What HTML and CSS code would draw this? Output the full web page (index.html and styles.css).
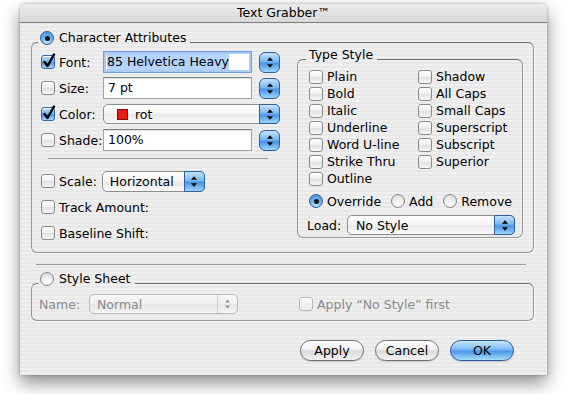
FILE: index.html
```html
<!DOCTYPE html>
<html>
<head>
<meta charset="utf-8">
<link rel="stylesheet" href="styles.css">
</head>
<body>
<div class="window">
  <div class="titlebar">Text Grabber™</div>
  <div class="content">
    <div class="group ca">
      <div class="group-title"><span class="radio on"></span><span>Character Attributes</span></div>
      <div class="ca-body">
        <div class="left">
          <div class="row">
            <span class="cb on"><svg class="check" viewBox="0 0 14 14"><path d="M3.5 7 L6.5 11 L13 -0.5"/></svg></span>
            <span class="lbl">Font:</span>
            <div class="field focus"><span class="sel">85 Helvetica Heavy</span></div>
            <span class="stepper"><svg class="arr" viewBox="0 0 7 12"><path d="M3.5 0 L7 4 L0 4 Z M3.5 12 L7 8 L0 8 Z"/></svg></span>
          </div>
          <div class="row">
            <span class="cb"></span>
            <span class="lbl">Size:</span>
            <div class="field">7 pt</div>
            <span class="stepper"><svg class="arr" viewBox="0 0 7 12"><path d="M3.5 0 L7 4 L0 4 Z M3.5 12 L7 8 L0 8 Z"/></svg></span>
          </div>
          <div class="row">
            <span class="cb on"><svg class="check" viewBox="0 0 14 14"><path d="M3.5 7 L6.5 11 L13 -0.5"/></svg></span>
            <span class="lbl">Color:</span>
            <div class="popup color"><span class="swatch"></span><span class="ptext">rot</span><span class="parr"><svg class="arr" viewBox="0 0 7 12"><path d="M3.5 0 L7 4 L0 4 Z M3.5 12 L7 8 L0 8 Z"/></svg></span></div>
          </div>
          <div class="row">
            <span class="cb"></span>
            <span class="lbl">Shade:</span>
            <div class="field">100%</div>
            <span class="stepper"><svg class="arr" viewBox="0 0 7 12"><path d="M3.5 0 L7 4 L0 4 Z M3.5 12 L7 8 L0 8 Z"/></svg></span>
          </div>
          <div class="sep"></div>
          <div class="row scale">
            <span class="cb"></span>
            <span class="lbl-auto">Scale:</span>
            <div class="popup hpop"><span class="ptext">Horizontal</span><span class="parr"><svg class="arr" viewBox="0 0 7 12"><path d="M3.5 0 L7 4 L0 4 Z M3.5 12 L7 8 L0 8 Z"/></svg></span></div>
          </div>
          <div class="row">
            <span class="cb"></span>
            <span class="lbl-auto">Track Amount:</span>
          </div>
          <div class="row">
            <span class="cb"></span>
            <span class="lbl-auto">Baseline Shift:</span>
          </div>
        </div>
        <div class="group ts">
          <div class="group-title small"><span>Type Style</span></div>
          <div class="styles">
            <div class="opt"><span class="cb"></span>Plain</div>
            <div class="opt"><span class="cb"></span>Shadow</div>
            <div class="opt"><span class="cb"></span>Bold</div>
            <div class="opt"><span class="cb"></span>All Caps</div>
            <div class="opt"><span class="cb"></span>Italic</div>
            <div class="opt"><span class="cb"></span>Small Caps</div>
            <div class="opt"><span class="cb"></span>Underline</div>
            <div class="opt"><span class="cb"></span>Superscript</div>
            <div class="opt"><span class="cb"></span>Word U-line</div>
            <div class="opt"><span class="cb"></span>Subscript</div>
            <div class="opt"><span class="cb"></span>Strike Thru</div>
            <div class="opt"><span class="cb"></span>Superior</div>
            <div class="opt"><span class="cb"></span>Outline</div>
          </div>
          <div class="radios">
            <div class="ropt"><span class="radio on"></span>Override</div>
            <div class="ropt"><span class="radio"></span>Add</div>
            <div class="ropt"><span class="radio"></span>Remove</div>
          </div>
          <div class="load">
            <span class="load-lbl">Load:</span>
            <div class="popup lpop"><span class="ptext">No Style</span><span class="parr"><svg class="arr" viewBox="0 0 7 12"><path d="M3.5 0 L7 4 L0 4 Z M3.5 12 L7 8 L0 8 Z"/></svg></span></div>
          </div>
        </div>
      </div>
    </div>
    <div class="hsep"></div>
    <div class="group ss">
      <div class="group-title"><span class="radio"></span><span>Style Sheet</span></div>
      <div class="ss-body">
        <span class="name-lbl">Name:</span>
        <div class="popup npop disabled"><span class="ptext">Normal</span><span class="parr"><svg class="arr" viewBox="0 0 7 12"><path d="M3.5 0 L7 4 L0 4 Z M3.5 12 L7 8 L0 8 Z"/></svg></span></div>
        <div class="opt dis"><span class="cb dis"></span>Apply “No Style” first</div>
      </div>
    </div>
    <div class="buttons">
      <span class="btn">Apply</span>
      <span class="btn">Cancel</span>
      <span class="btn default">OK</span>
    </div>
  </div>
</div>
</body>
</html>
```
FILE: styles.css
```css
html, body {
  margin: 0;
  padding: 0;
  background: #ffffff;
}
body {
  font-family: "DejaVu Sans", "Liberation Sans", sans-serif;
  font-size: 12.5px;
  color: #000;
  min-height: 394px;
}
.window {
  width: 527px;
  margin: 4px 0 0 20px;
  background: repeating-linear-gradient(to bottom, #efefef 0px, #efefef 2px, #e8e8e8 2px, #e8e8e8 4px) fixed;
  box-shadow: 0 8px 18px rgba(0,0,0,0.45), 0 0 3px rgba(0,0,0,0.30);
  border-radius: 5px 5px 0 0;
}
.titlebar {
  height: 18px;
  line-height: 18px;
  text-align: center;
  border-bottom: 1px solid #7e7e7e;
  border-radius: 5px 5px 0 0;
  background: linear-gradient(to bottom, #ebebeb, #d9d9d9);
}
.content {
  padding: 19px 13px 14px 11px;
}
.group {
  border: 1px solid #969696;
  border-top-color: #6c6c6c;
  border-radius: 6px;
  box-shadow: 1px 1px 0 rgba(255,255,255,0.7);
}
.group-title {
  display: flex;
  align-items: center;
  gap: 5px;
  height: 16px;
  line-height: 16px;
  width: max-content;
  margin: -13px 0 0 -3px;
  padding: 0 4px 0 2px;
  background: repeating-linear-gradient(to bottom, #efefef 0px, #efefef 2px, #e8e8e8 2px, #e8e8e8 4px) fixed;
}
.group-title.small {
  margin-left: -3px;
  padding: 0 4px 0 3px;
}
.ss .group-title {
  margin-left: -1px;
}
/* Character attributes */
.ca {
  padding: 0 10px 8px 9px;
}
.ca-body {
  display: flex;
  margin-top: 5px;
}
.left {
  width: 239px;
  flex: none;
  display: flex;
  flex-direction: column;
}
.row {
  display: flex;
  align-items: center;
  height: 22px;
}
.row + .row { margin-top: 4px; }
.sep {
  height: 0;
  border-top: 1px solid #9a9a9a;
  margin: 7px 12px 0 7px;
}
.row.scale { margin-top: 11px; }
.lbl { width: 44px; flex: none; }
.lbl-auto { margin-right: 5px; }

/* checkbox */
.cb {
  position: relative;
  flex: none;
  box-sizing: border-box;
  width: 14px;
  height: 14px;
  margin-right: 4px;
  border: 1px solid #8a8a8a;
  border-radius: 3px;
  background: linear-gradient(to bottom, #ffffff 0%, #f0f0f0 45%, #e1e1e1 55%, #f7f7f7 100%);
  box-shadow: inset 0 1px 0 #fff;
}
.cb.on {
  border-color: #35679f;
  background: linear-gradient(to bottom, #c2e0fa 0%, #7ab8f2 45%, #4a95e6 55%, #a9dbff 100%);
}
.cb.dis {
  border-color: #b8b8b8;
  background: linear-gradient(to bottom, #fafafa, #ececec);
}
.check {
  position: absolute;
  left: -1px;
  top: -1px;
  width: 14px;
  height: 14px;
  overflow: visible;
}
.check path {
  fill: none;
  stroke: #000;
  stroke-width: 2.4;
  stroke-linecap: round;
  stroke-linejoin: round;
}

/* radio */
.radio {
  flex: none;
  box-sizing: border-box;
  width: 14px;
  height: 14px;
  border-radius: 50%;
  border: 1px solid #858585;
  background: radial-gradient(circle at 50% 80%, #ffffff 0%, #f0f0f0 40%, #d8d8d8 100%);
  display: inline-flex;
  align-items: center;
  justify-content: center;
}
.radio.on {
  border-color: #2f5f99;
  background: radial-gradient(circle at 50% 85%, #b8e4ff 0%, #6fb2f0 45%, #3b86de 100%);
}
.radio.on::after {
  content: "";
  width: 5px;
  height: 5px;
  border-radius: 50%;
  background: #111;
}

/* text field */
.field {
  box-sizing: border-box;
  width: 149px;
  height: 22px;
  flex: none;
  margin-right: 7px;
  padding-left: 4px;
  line-height: 20px;
  background: #fff;
  border: 1px solid #a3a3a3;
  border-top-color: #7c7c7c;
  box-shadow: inset 0 1px 1px rgba(0,0,0,0.12);
}
.field.focus {
  border: 1px solid #6d9fdc;
  box-shadow: inset 0 0 0 2px #a9cbf3;
  padding-left: 3px;
  padding-top: 2px;
  line-height: 16px;
}
.sel {
  background: #b5d5ff;
  display: inline-block;
  height: 16px;
}

/* stepper */
.stepper {
  box-sizing: border-box;
  width: 21px;
  height: 21px;
  flex: none;
  border: 1px solid #2d5f9c;
  border-radius: 6px;
  background: linear-gradient(to bottom, #c6e3fb 0%, #7ab7f1 45%, #4b93e4 55%, #9bd6ff 100%);
  display: flex;
  align-items: center;
  justify-content: center;
}
.arr {
  width: 6px;
  height: 11px;
}
.arr path { fill: #000; }

/* popup */
.popup {
  box-sizing: border-box;
  height: 20px;
  flex: none;
  display: flex;
  align-items: center;
  border: 1px solid #8e8e8e;
  border-radius: 5px;
  background: linear-gradient(to bottom, #ffffff 0%, #f4f4f4 48%, #e9e9e9 52%, #fafafa 100%);
}
.parr {
  box-sizing: border-box;
  margin: -1px -1px -1px auto;
  width: 21px;
  height: 20px;
  border: 1px solid #2d5f9c;
  border-radius: 0 5px 5px 0;
  background: linear-gradient(to bottom, #c6e3fb 0%, #7ab7f1 45%, #4b93e4 55%, #9bd6ff 100%);
  display: flex;
  align-items: center;
  justify-content: center;
}
.popup.color {
  width: 177px;
  padding-left: 13px;
}
.swatch {
  box-sizing: border-box;
  width: 11px;
  height: 11px;
  background: #ea1a10;
  border: 1px solid #8a0a05;
  margin-right: 7px;
}
.popup.hpop {
  width: 103px;
  height: 21px;
  padding-left: 7px;
}
.popup.hpop .parr { height: 21px; }
.popup.lpop {
  width: 168px;
  padding-left: 8px;
}
.popup.disabled {
  color: #8a8a8a;
  border-color: #b9b9b9;
  background: linear-gradient(to bottom, #f7f7f7 0%, #efefef 50%, #e6e6e6 52%, #f3f3f3 100%);
}
.popup.disabled .parr {
  border: none;
  border-left: 1px solid #cfcfcf;
  margin: 0 0 0 auto;
  height: 18px;
  width: 20px;
  background: transparent;
}
.popup.disabled .arr path { fill: #8c8c8c; }
.popup.disabled .arr { width: 5px; height: 10px; }

/* type style */
.ts {
  flex: 1;
  margin: 8px 0 0 17px;
  padding: 0 7px 2px 11px;
  align-self: flex-start;
}
.styles {
  display: grid;
  grid-template-columns: 109px auto;
  grid-auto-rows: 17px;
  margin-top: 5px;
}
.opt {
  display: flex;
  align-items: center;
  white-space: nowrap;
}
.radios {
  display: flex;
  align-items: center;
  height: 20px;
  margin-top: 4px;
  gap: 10px;
}
.ropt {
  display: flex;
  align-items: center;
  gap: 4px;
}
.load {
  display: flex;
  align-items: center;
  height: 20px;
  margin: 4px 0 0 -2px;
}
.load-lbl {
  width: 40px;
  flex: none;
}

.hsep {
  border-top: 1px solid #9a9a9a;
  margin: 11px 8px 0 5px;
}

/* style sheet */
.ss {
  margin-top: 18px;
  padding: 0 7px 6px 7px;
}
.ss-body {
  display: flex;
  align-items: center;
  height: 20px;
  margin-top: 7px;
}
.name-lbl {
  width: 50px;
  color: #8a8a8a;
  flex: none;
}
.popup.npop {
  width: 149px;
  padding-left: 7px;
}
.opt.dis {
  color: #8a8a8a;
  margin-left: 61px;
}

/* buttons */
.buttons {
  display: flex;
  justify-content: flex-end;
  gap: 11px;
  margin: 19px 20px 0 0;
}
.btn {
  box-sizing: border-box;
  width: 64px;
  height: 21px;
  line-height: 19px;
  text-align: center;
  border: 1px solid #6f6f6f;
  border-radius: 11px;
  background: linear-gradient(to bottom, #ffffff 0%, #f3f3f3 40%, #dcdcdc 55%, #f2f2f2 100%);
  box-shadow: 0 1px 1px rgba(0,0,0,0.15);
}
.btn.default {
  border-color: #2a5a98;
  background: linear-gradient(to bottom, #c9e6fd 0%, #7fbdf4 42%, #4c98e8 55%, #a5e0ff 100%);
}
```
